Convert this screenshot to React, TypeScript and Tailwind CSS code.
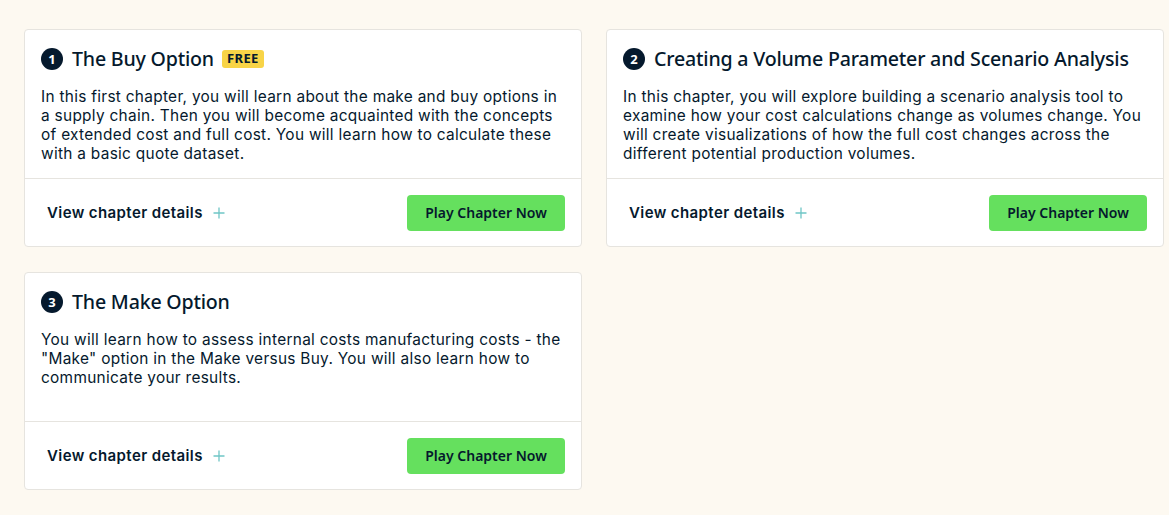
import React from "react";

type Chapter = {
  n: number;
  title: string;
  free?: boolean;
  text: string;
};

const chapters: Chapter[] = [
  {
    n: 1,
    title: "The Buy Option",
    free: true,
    text: "In this first chapter, you will learn about the make and buy options in a supply chain. Then you will become acquainted with the concepts of extended cost and full cost. You will learn how to calculate these with a basic quote dataset.",
  },
  {
    n: 2,
    title: "Creating a Volume Parameter and Scenario Analysis",
    text: "In this chapter, you will explore building a scenario analysis tool to examine how your cost calculations change as volumes change. You will create visualizations of how the full cost changes across the different potential production volumes.",
  },
  {
    n: 3,
    title: "The Make Option",
    text: 'You will learn how to assess internal costs manufacturing costs - the "Make" option in the Make versus Buy. You will also learn how to communicate your results.',
  },
];

const body = { fontFamily: "Inter, \"Noto Sans\", sans-serif" };

function ChapterCard({ c }: { c: Chapter }) {
  return (
    <div className="flex h-[218px] flex-col rounded-[4px] border border-[#e6e4df] bg-white">
      <div className="h-[149px] border-b border-[#e6e4df] px-[16px] pt-[15px]">
        <div className="flex h-[28px] items-center">
          <span className="mr-[9px] flex h-[22px] w-[22px] items-center justify-center rounded-full bg-[#05192d] text-[13px] font-bold leading-none text-white">
            {c.n}
          </span>
          <h3 className="text-[19.6px] font-medium tracking-[-0.2px] text-[#05192d]">{c.title}</h3>
          {c.free && (
            <span className="ml-[8px] flex h-[18px] items-center rounded-[3px] bg-[#f8d447] px-[5px] text-[13px] font-bold tracking-[0.4px] text-[#05192d]">
              FREE
            </span>
          )}
        </div>
        <p
          className="mt-[14px] text-[15.4px] leading-[19px] tracking-[0.3px] text-[#05192d]"
          style={body}
        >
          {c.text}
        </p>
      </div>
      <div className="flex flex-1 items-center justify-between pl-[22px] pr-[16px]">
        <div className="flex items-center pt-[1px]">
          <span className="text-[15px] font-semibold tracking-[0.4px] text-[#05192d]" style={body}>
            View chapter details
          </span>
          <svg className="ml-[10px]" width="12" height="12" viewBox="0 0 12 12" fill="none">
            <path d="M6 0.5v11M0.5 6h11" stroke="#6fc6c6" strokeWidth="1.3" />
          </svg>
        </div>
        <button className="h-[36px] w-[158px] rounded-[4px] bg-[#65e05e] text-[14px] font-semibold text-[#05192d]">
          Play Chapter Now
        </button>
      </div>
    </div>
  );
}

export default function App() {
  return (
    <div
      className="min-h-[515px] w-[1169px] bg-[#fdf9f1] pl-[24px] pt-[29px]"
      style={{ fontFamily: '"Noto Sans", Inter, sans-serif' }}
    >
      <div className="grid grid-cols-[558px_558px] gap-x-[24px] gap-y-[25px]">
        {chapters.map((c) => (
          <ChapterCard key={c.n} c={c} />
        ))}
      </div>
    </div>
  );
}
